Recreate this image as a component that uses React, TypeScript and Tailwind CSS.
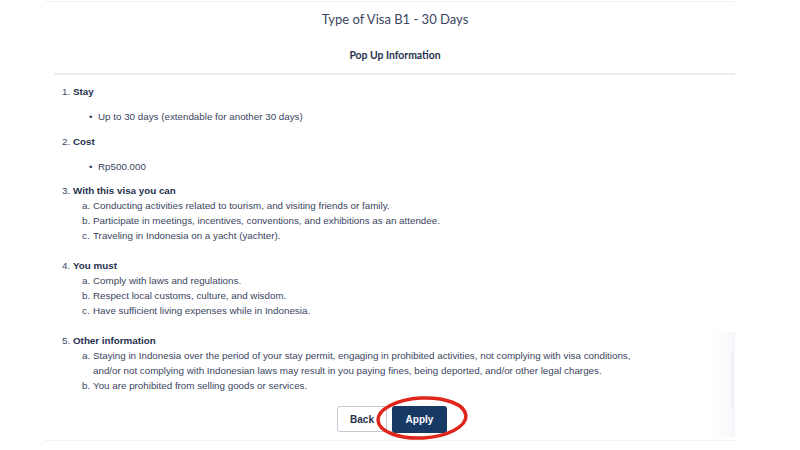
import React from "react";

const sans = { fontFamily: '"Liberation Sans", Arial, sans-serif' };
const lato = { fontFamily: 'Lato, "Open Sans", sans-serif' };

function Head({ n, children, className = "" }: { n: string; children: React.ReactNode; className?: string }) {
  return (
    <div className={`flex leading-[15px] ${className}`}>
      <span className="w-[11px]">{n}</span>
      <span className="font-bold text-[#26314d]">{children}</span>
    </div>
  );
}

function Sub({ l, children }: { l: string; children: React.ReactNode }) {
  return (
    <div className="flex leading-[15px] pl-[20px]">
      <span className="w-[11px] shrink-0">{l}</span>
      <span>{children}</span>
    </div>
  );
}

function Bullet({ children }: { children: React.ReactNode }) {
  return (
    <div className="flex leading-[15px] pl-[27px] mt-[10px]">
      <span className="w-[9px]">•</span>
      <span>{children}</span>
    </div>
  );
}

export default function App() {
  return (
    <div className="w-[800px] h-[450px] bg-white relative overflow-hidden">
      <div className="ml-[45px] mt-px w-[690px] h-[440px] border-t border-b border-[#f0f1f4] flex flex-col relative">
        <div className="flex flex-col items-center pl-[10px] h-[71px]" style={lato}>
          <div className="text-[13px] text-[#3a4560] mt-[8px] leading-[18px]">Type of Visa B1 - 30 Days</div>
          <div className="text-[10.4px] font-bold text-[#26314d] mt-[20px] leading-[14px]">Pop Up Information</div>
        </div>
        <div className="ml-[9px] h-[2px] bg-[#eceef3]" />
        <div className="pl-[17px] pt-[9px] text-[9.8px] text-[#3a4560]" style={sans}>
          <Head n="1.">Stay</Head>
          <Bullet>Up to 30 days (extendable for another 30 days)</Bullet>
          <Head n="2." className="mt-[10px]">Cost</Head>
          <Bullet>Rp500.000</Bullet>
          <Head n="3." className="mt-[9px]">With this visa you can</Head>
          <Sub l="a.">Conducting activities related to tourism, and visiting friends or family.</Sub>
          <Sub l="b.">Participate in meetings, incentives, conventions, and exhibitions as an attendee.</Sub>
          <Sub l="c.">Traveling in Indonesia on a yacht (yachter).</Sub>
          <Head n="4." className="mt-[15px]">You must</Head>
          <Sub l="a.">Comply with laws and regulations.</Sub>
          <Sub l="b.">Respect local customs, culture, and wisdom.</Sub>
          <Sub l="c.">Have sufficient living expenses while in Indonesia.</Sub>
          <Head n="5." className="mt-[15px]">Other information</Head>
          <Sub l="a.">
            Staying in Indonesia over the period of your stay permit, engaging in prohibited activities, not complying with visa conditions,
            <br />
            and/or not complying with Indonesian laws may result in you paying fines, being deported, and/or other legal charges.
          </Sub>
          <Sub l="b.">You are prohibited from selling goods or services.</Sub>
          <div className="flex justify-center gap-[5px] mt-[13px] pr-[13px]">
            <button className="w-[50px] h-[26px] border border-[#c3c8d2] rounded-[3px] text-[10px] font-bold text-[#26314d] bg-white">Back</button>
            <button className="w-[55px] h-[27px] rounded-[3px] text-[10px] font-bold text-white bg-[#173a64]">Apply</button>
          </div>
        </div>
        <div className="absolute right-0 top-[330px] w-[24px] h-[105px] bg-gradient-to-r from-transparent to-[#f6f7fa]" />
        <div className="absolute right-[2px] top-[348px] w-px h-[57px] bg-[#e6e8ee]" />
      </div>
      <svg className="absolute left-[375px] top-[395px]" width="94" height="46" viewBox="0 0 94 46">
        <ellipse cx="47" cy="23" rx="44" ry="20" fill="none" stroke="#e0261b" strokeWidth="3.5" transform="rotate(-3 47 23)" />
      </svg>
    </div>
  );
}
